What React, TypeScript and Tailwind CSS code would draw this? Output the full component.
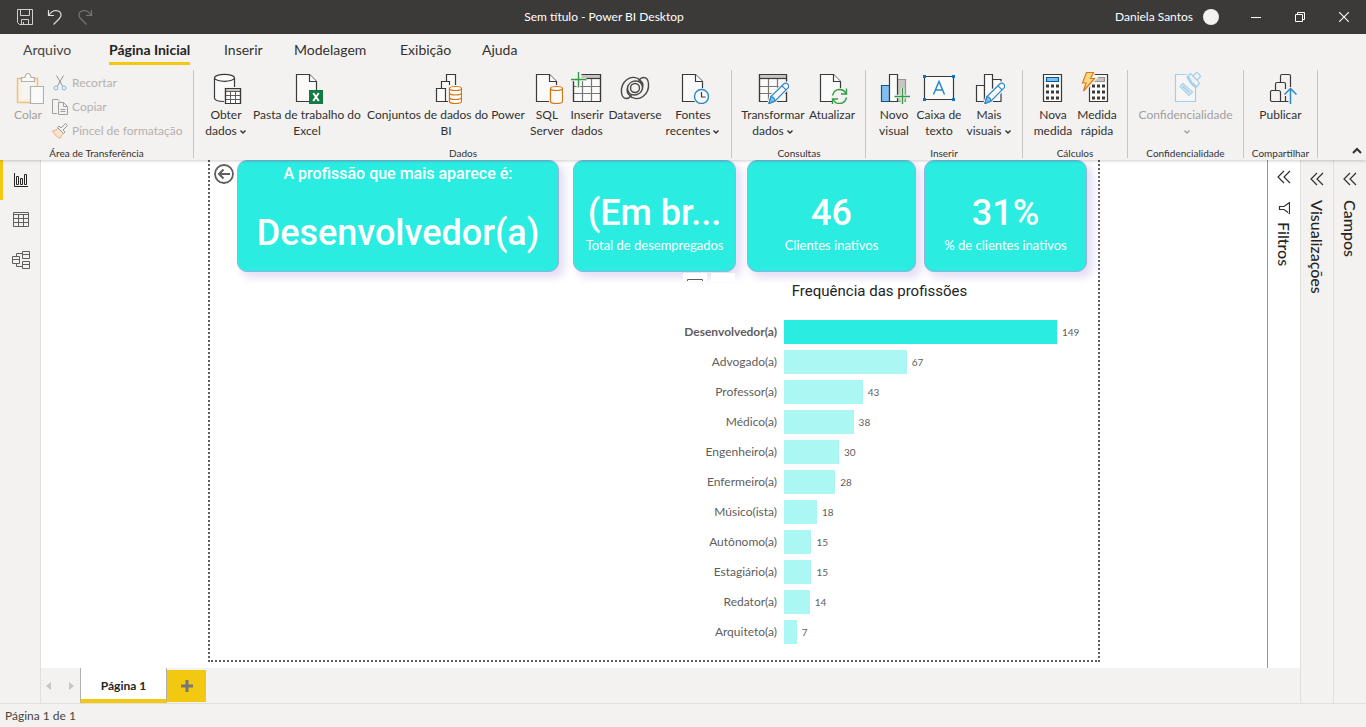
import type { ReactNode } from "react";
import { clsx } from "clsx";

const TABS = [
  { name: "Arquivo", box: "w-[86px]", tone: "text-[#484644]" },
  { name: "Página Inicial", box: "w-[115px]", tone: "text-[#252423] font-bold", active: true },
  { name: "Inserir", box: "w-[70px]", tone: "text-[#323130]" },
  { name: "Modelagem", box: "w-[106px]", tone: "text-[#323130]" },
  { name: "Exibição", box: "w-[82px]", tone: "text-[#323130]" },
  { name: "Ajuda", box: "w-[60px]", tone: "text-[#323130]" },
];

const JOBS = [
  { name: "Desenvolvedor(a)", count: 149 },
  { name: "Advogado(a)", count: 67 },
  { name: "Professor(a)", count: 43 },
  { name: "Médico(a)", count: 38 },
  { name: "Engenheiro(a)", count: 30 },
  { name: "Enfermeiro(a)", count: 28 },
  { name: "Músico(ista)", count: 18 },
  { name: "Autônomo(a)", count: 15 },
  { name: "Estagiário(a)", count: 15 },
  { name: "Redator(a)", count: 14 },
  { name: "Arquiteto(a)", count: 7 },
];

const MAX_COUNT = 149;

function Icon({ children, className = "size-8" }: { children: ReactNode; className?: string }) {
  return (
    <svg viewBox="0 0 32 32" fill="none" stroke="#3b3a39" strokeWidth="1.2" className={clsx("shrink-0", className)} aria-hidden="true">
      {children}
    </svg>
  );
}

function Chevron({ className = "" }: { className?: string }) {
  return (
    <svg viewBox="0 0 8 8" fill="none" stroke="currentColor" strokeWidth="1.4" className={clsx("inline-block size-2", className)} aria-hidden="true">
      <path d="M1.5 2.5 4 5l2.5-2.5" />
    </svg>
  );
}

/* shared icon parts */

function Doc({ x = 5 }: { x?: number }) {
  return (
    <g transform={`translate(${x} 2)`}>
      <path d="M.5.5h13l7 7v20H.5z" fill="#fafafa" />
      <path d="M13.5.5v7h7" fill="#fff" />
    </g>
  );
}

function Pencil() {
  return (
    <g>
      <path d="M12 31.5l2-7L27 11.8q1.8-1.5 3.7.3t.3 3.8L18 29z" fill="#fafafa" stroke="#f3f2f1" strokeWidth="3.5" />
      <path d="M12 31.5l2-7L27 11.8q1.8-1.5 3.7.3t.3 3.8L18 29z" fill="#fafafa" stroke="#2b88c8" />
      <path d="M12 31.5l2-7q3.5.5 4 4.5z" fill="#83beec" stroke="#2b88c8" />
      <path d="M25 13.8l4 4" stroke="#2b88c8" />
    </g>
  );
}

function Grid() {
  return (
    <g>
      <path d="M2.5 2.5h27v27h-27z" fill="#fafafa" />
      <path d="M3 3h26v3.5H3z" fill="#c8c6c4" stroke="none" />
      <path d="M2.5 6.5h27" />
      <path d="M3 14.5h26M3 21.5h26M11.5 7v22M20.5 7v22" stroke="#797775" />
      <path d="M2.5 2.5h27v27h-27z" />
    </g>
  );
}

function Keys({ x }: { x: number }) {
  return <path d={`M${x} 14h13M${x} 20h13M${x} 26h13`} strokeWidth="3" strokeDasharray="3 2" />;
}

const PasteIcon = (
  <Icon>
    <path d="M5.5 6.5h20v24h-20z" fill="#faf0dc" stroke="#e8c08c" strokeWidth="1.5" />
    <path d="M9.5 7h12v20h-12z" fill="#f6f5f4" stroke="none" />
    <path d="M9.5 9.5v-4H13q.5-4 3-4t3 4h3.500v4z" fill="#fafafa" stroke="#b3b0ad" />
    <path d="M18.5 14.5h13v17h-13z" fill="#fafafa" stroke="#b3b0ad" />
  </Icon>
);

const DatabaseIcon = (
  <Icon>
    <path d="M4.5 6v20q0 3.5 10 3.5t10-3.5V6" fill="#fafafa" />
    <ellipse cx="14.5" cy="5.8" rx="10" ry="3.5" fill="#fafafa" />
    <path d="M14 15h18v17H14z" fill="#f3f2f1" stroke="none" />
    <path d="M15.5 16.5h15v15h-15z" fill="#fff" />
    <path d="M16 17h14v2.5H16z" fill="#c8c6c4" stroke="none" />
    <path d="M15.5 19.5h15M15.5 23.5h15M15.5 27.5h15M20.5 19.5v12M25.5 19.5v12" stroke="#605e5c" strokeWidth="1" />
    <path d="M15.5 16.5h15v15h-15z" />
  </Icon>
);

const ExcelIcon = (
  <Icon>
    <Doc x={5} />
    <path d="M18 18h14v14H18z" fill="#107c41" stroke="none" />
    <path d="M22.2 21l5.6 8M27.8 21l-5.6 8" stroke="#fff" strokeWidth="2" />
  </Icon>
);

const DatasetIcon = (
  <Icon>
    <path d="M16.5 9V2.5h9v13h-9" fill="#fafafa" />
    <path d="M11.5 16V9.5h8v20h-8" fill="#fafafa" />
    <path d="M6.5 16.5h9v13h-9z" fill="#fafafa" />
    <path d="M18 13h14v19H18z" fill="#f3f2f1" stroke="none" />
    <path d="M19.5 16.5v13q0 2 6 2t6-2v-13" fill="#fff" stroke="#d9730d" />
    <ellipse cx="25.5" cy="16.5" rx="6" ry="2" fill="#fff" stroke="#d9730d" />
    <path d="M19.5 21q0 2 6 2t6-2M19.5 25.5q0 2 6 2t6-2" stroke="#d9730d" />
  </Icon>
);

const SqlIcon = (
  <Icon>
    <Doc x={5} />
    <path d="M18 13h14v19H18z" fill="#f3f2f1" stroke="none" />
    <path d="M19.5 16.5v13q0 2 6 2t6-2v-13" fill="#fafafa" stroke="#d9730d" />
    <ellipse cx="25.5" cy="16.5" rx="6" ry="2" fill="#fafafa" stroke="#d9730d" />
  </Icon>
);

const InsertDataIcon = (
  <Icon>
    <Grid />
    <path d="M0 0h10.5v7H0z" fill="#f3f2f1" stroke="none" />
    <path d="M7.5 0v15.5M0 7.5h15.5" stroke="#f3f2f1" strokeWidth="3.5" />
    <path d="M7.5 0v15.5M0 7.5h15.5" stroke="#2f9e44" strokeWidth="1.4" />
  </Icon>
);

const SWIRL = "M21.5 8.5C18 4.5 12 4.5 8 7.5 4 10.5 2 15 2.5 20.5c.3 4 2.5 6 5 6 2 0 3-.8 4.500-2.500C8.500 22.500 7.500 19 8.500 15.500 9.500 11.500 13 9 16.500 9c4 0 6.500 2 7 6.500";

const DataverseIcon = (
  <Icon>
    <g strokeWidth="1.4" stroke="#484644">
      <path d={SWIRL} />
      <path d={SWIRL} transform="rotate(180 16 16)" />
      <circle cx="16" cy="16" r="4.5" />
    </g>
  </Icon>
);

const RecentIcon = (
  <Icon>
    <Doc x={5} />
    <circle cx="24.5" cy="24.5" r="8.5" fill="#f3f2f1" stroke="none" />
    <circle cx="24.5" cy="24.5" r="7" fill="#fafafa" stroke="#2b88c8" strokeWidth="1.4" />
    <path d="M24.5 20v5h4" />
  </Icon>
);

const TransformIcon = (
  <Icon>
    <Grid />
    <Pencil />
  </Icon>
);

const RefreshIcon = (
  <Icon>
    <Doc x={4} />
    <circle cx="23.5" cy="24.5" r="8.5" fill="#f3f2f1" stroke="none" />
    <path d="M16.5 23.5q1.5-6 7-6 4.5 0 6.5 4M30.5 16.5V22H25M30.5 25.5q-1.5 6-7 6-4.5 0-6.5-4M16.5 32.5V27H22" stroke="#2f9e44" strokeWidth="1.4" />
  </Icon>
);

const NewVisualIcon = (
  <Icon>
    <path d="M3.5 13.5h8v16h-8z" fill="#83beec" stroke="#005a9e" />
    <path d="M19.5 7.5h8v22h-8z" fill="#c8c6c4" stroke="#979593" />
    <path d="M11.5 2.5h8v27h-8z" fill="#fafafa" />
    <path d="M24.5 16v16M16.5 24.5h16" stroke="#f3f2f1" strokeWidth="3.5" />
    <path d="M24.5 16v16M16.5 24.5H32" stroke="#2f9e44" strokeWidth="1.4" />
  </Icon>
);

const TextBoxIcon = (
  <Icon>
    <path d="M1.5 4.5h29v23h-29z" fill="#fafafa" />
    <path d="M10.5 22.5 16 9.500l5.5 13M12.500 18h7" stroke="#2b88c8" strokeWidth="1.5" />
    <path d="M0 3h3v3H0zM29 3h3v3h-3zM0 26h3v3H0zM29 26h3v3h-3z" fill="#0078d4" stroke="none" />
  </Icon>
);

const MoreVisualsIcon = (
  <Icon>
    <path d="M3.5 13.5h8v16h-8zM19.5 7.5H28v22h-8.500z" fill="#fafafa" />
    <path d="M11.5 2.5h8v27h-8z" fill="#fafafa" />
    <Pencil />
  </Icon>
);

const MeasureIcon = (
  <Icon>
    <path d="M6.5 2.5h18v27h-18z" fill="#fafafa" />
    <path d="M9.5 5.5h12v4h-12z" fill="#83beec" stroke="#005a9e" />
    <Keys x={9} />
  </Icon>
);

const QuickMeasureIcon = (
  <Icon>
    <path d="M8.5 2.5h18v27h-18z" fill="#fafafa" />
    <path d="M12 5.5h11.5v4H12z" fill="#c8c6c4" stroke="#979593" />
    <Keys x={11} />
    <path d="M5.5.5h7l-3 6h4L2.5 19 5 11H1.500z" fill="#fad98b" stroke="#f3f2f1" strokeWidth="4" />
    <path d="M5.5.5h7l-3 6h4L2.5 19 5 11H1.500z" fill="#fad98b" stroke="#e07b12" />
  </Icon>
);

const SensitivityIcon = (
  <Icon>
    <g stroke="#a3cfe8">
      <path d="M16.5 2.5h-11v27h20V16" fill="#f6f6f6" />
      <path d="M10 14.5l3-3 9.500 8.500-3.500 3.500z" />
      <path d="M12.5 14l7.500 7" strokeWidth="1.8" />
      <path d="M17.5 4.5l3-3L23 4l3.500-3.500q2.500.5 4 4L27 8l2.500 3.500-3.500 4q-6-3.500-8.500-11z" fill="#f3f2f1" />
      <path d="M17.5 4.5q3 6.500 8.500 10.500" strokeWidth="2.5" />
      <path d="M23 4l4 4" />
    </g>
  </Icon>
);

const PublishIcon = (
  <Icon>
    <path d="M15.5 10V4q0-1.500 1.500-1.500h7q1.500 0 1.500 1.500v11" />
    <path d="M10.5 18v-6q0-1.500 1.500-1.500h7q1.500 0 1.500 1.500v5" />
    <path d="M7 18.500h6.500q2 0 2 2v9H7q-1.500 0-1.500-1.500v-8q0-1.500 1.500-1.500zM15.500 29.500h8M20.500 24v5.500" />
    <path d="M25.500 32V16.500M19.500 22.500l6-6 6 6" stroke="#2b88c8" strokeWidth="1.5" />
  </Icon>
);

function Tool({ icon, lines, box, menu, disabled }: { icon: ReactNode; lines: string[]; box: string; menu?: boolean; disabled?: boolean }) {
  return (
    <button
      type="button"
      disabled={disabled}
      className={clsx(
        "flex flex-col items-center text-xs leading-4 whitespace-nowrap",
        disabled ? "text-[#a19f9d]" : "text-[#323130]",
        box,
      )}
    >
      {icon}
      <span className="mt-[3px]">{lines[0]}</span>
      {(lines[1] || menu) && (
        <span>
          {lines[1]}
          {menu && <Chevron className="ml-0.5" />}
        </span>
      )}
    </button>
  );
}

function Group({ label, box, children }: { label: string; box: string; children: ReactNode }) {
  return (
    <section className={clsx("flex h-[88px] shrink-0 flex-col border-r border-[#c8c6c4]", box)}>
      <div className="flex flex-1 justify-center pt-0.5">{children}</div>
      <h2 className="text-center text-[10px] leading-[10px] whitespace-nowrap text-[#323130]">{label}</h2>
    </section>
  );
}

function TitleBar() {
  return (
    <header className="flex h-[34px] items-center bg-[#3b3a39] text-xs text-white">
      <div className="flex items-center gap-[14px] pl-[17px]">
        <button type="button" aria-label="Salvar">
          <svg viewBox="0 0 16 16" fill="none" stroke="#d2d0ce" className="size-4">
            <path d="M.5.5h15v15h-13l-2-2zM3.500.5v6h9v-6M4.500 15.500v-5h7v5M6.500 15.500v-2.500" />
          </svg>
        </button>
        <button type="button" aria-label="Desfazer">
          <svg viewBox="0 0 16 16" fill="none" stroke="#e1dfdd" strokeWidth="1.2" className="size-4">
            <path d="M1.500 1v5.500H7M1.500 6.500Q5 1.500 9 1.500q5 .5 5 4.500 0 2-2 4L6.500 15.500" />
          </svg>
        </button>
        <button type="button" aria-label="Refazer" disabled>
          <svg viewBox="0 0 16 16" fill="none" stroke="#797775" strokeWidth="1.2" className="size-4">
            <path d="M14.500 1v5.500H9M14.500 6.500Q11 1.500 7 1.500 2 2 2 6q0 2 2 4l5.500 5.500" />
          </svg>
        </button>
      </div>
      <h1 className="flex-1 text-center">Sem título - Power BI Desktop</h1>
      <div className="flex items-center">
        <span className="w-[88px]">Daniela Santos</span>
        <span className="size-4 rounded-full bg-[#f3f2f1]" />
        <button type="button" aria-label="Minimizar" className="ml-[15px] flex w-11 justify-center">
          <svg viewBox="0 0 10 10" stroke="#fff" className="size-[10px]"><path d="M0 5.500h10" /></svg>
        </button>
        <button type="button" aria-label="Restaurar" className="flex w-11 justify-center">
          <svg viewBox="0 0 10 10" fill="none" stroke="#fff" className="size-[10px]"><path d="M.5 2.500h7v7h-7zM2.500 2.500v-2h7v7h-2" /></svg>
        </button>
        <button type="button" aria-label="Fechar" className="flex w-11 justify-center">
          <svg viewBox="0 0 10 10" stroke="#fff" strokeWidth="1.1" className="size-[10px]"><path d="M0 0l10 10M10 0 0 10" /></svg>
        </button>
      </div>
    </header>
  );
}

function Ribbon() {
  return (
    <div className="relative z-10 bg-[#f3f2f1] shadow-[0_1px_3px_rgba(0,0,0,0.2)]">
      <nav className="flex h-9 pl-[23px] text-sm">
        {TABS.map((tab) => (
          <div key={tab.name} className={clsx("shrink-0", tab.box)}>
            <button
              type="button"
              className={clsx(
                "h-[31px] border-b-[3px] pt-1 whitespace-nowrap",
                tab.active ? "border-[#f2c811]" : "border-transparent",
                tab.tone,
              )}
            >
              {tab.name}
            </button>
          </div>
        ))}
      </nav>
      <div className="flex h-[90px]">
        <Group label="Área de Transferência" box="w-[194px]">
          <Tool icon={PasteIcon} lines={["Colar"]} box="w-[52px] pl-1" disabled />
          <div className="flex flex-1 flex-col text-xs leading-4 text-[#b3b0ad]">
            <button type="button" disabled className="flex h-[22px] items-center gap-1">
              <svg viewBox="0 0 16 16" fill="none" stroke="#979593" className="size-4" aria-hidden="true">
                <path d="M4.500.5 10.500 11M11.500.5l-6 10.500" />
                <circle cx="4" cy="13" r="2" stroke="#83b5d6" />
                <circle cx="12" cy="13" r="2" stroke="#83b5d6" />
              </svg>
              Recortar
            </button>
            <button type="button" disabled className="flex h-[26px] items-center gap-1">
              <svg viewBox="0 0 16 16" fill="none" stroke="#a19f9d" className="size-4" aria-hidden="true">
                <path d="M5 14.500H.5v-14H6l2 2M6.500 3.500h5l4 4v8h-9zM11.500 3.500v4h4M8.500 10.500h5M8.500 12.500h5" />
              </svg>
              Copiar
            </button>
            <button type="button" disabled className="flex h-[22px] items-center gap-1 whitespace-nowrap">
              <svg viewBox="0 0 16 16" fill="none" stroke="#979593" className="size-4" aria-hidden="true">
                <path d="M.5 8q4-.5 6-3l5 5q-2.500 2.500-3.500 5.500Q3 13 .5 8z" fill="#fae3cc" stroke="#e8b08c" />
                <path d="M5.500 4.500 7 3l2 2 4.500-4.500 2 2L11 7l2 2-1.500 1.500z" fill="#f3f2f1" />
              </svg>
              Pincel de formatação
            </button>
          </div>
        </Group>
        <Group label="Dados" box="w-[538px] pl-px">
          <Tool icon={DatabaseIcon} lines={["Obter", "dados"]} box="w-[48px]" menu />
          <Tool icon={ExcelIcon} lines={["Pasta de trabalho do", "Excel"]} box="w-[114px]" />
          <Tool icon={DatasetIcon} lines={["Conjuntos de dados do Power", "BI"]} box="w-[164px]" />
          <Tool icon={SqlIcon} lines={["SQL", "Server"]} box="w-[38px]" />
          <Tool icon={InsertDataIcon} lines={["Inserir", "dados"]} box="w-[42px]" />
          <Tool icon={DataverseIcon} lines={["Dataverse"]} box="w-[54px]" />
          <Tool icon={RecentIcon} lines={["Fontes", "recentes"]} box="w-[62px]" menu />
        </Group>
        <Group label="Consultas" box="w-[134px] pl-px">
          <Tool icon={TransformIcon} lines={["Transformar", "dados"]} box="w-[66px]" menu />
          <Tool icon={RefreshIcon} lines={["Atualizar"]} box="w-[52px]" />
        </Group>
        <Group label="Inserir" box="w-[157px]">
          <Tool icon={NewVisualIcon} lines={["Novo", "visual"]} box="w-[40px]" />
          <Tool icon={TextBoxIcon} lines={["Caixa de", "texto"]} box="w-[50px]" />
          <Tool icon={MoreVisualsIcon} lines={["Mais", "visuais"]} box="w-[50px]" menu />
        </Group>
        <Group label="Cálculos" box="w-[105px]">
          <Tool icon={MeasureIcon} lines={["Nova", "medida"]} box="w-[44px]" />
          <Tool icon={QuickMeasureIcon} lines={["Medida", "rápida"]} box="w-[44px]" />
        </Group>
        <Group label="Confidencialidade" box="w-[116px]">
          <Tool icon={SensitivityIcon} lines={["Confidencialidade", ""]} box="w-[100px]" menu disabled />
        </Group>
        <Group label="Compartilhar" box="w-[74px]">
          <Tool icon={PublishIcon} lines={["Publicar"]} box="w-[60px]" />
        </Group>
        <div className="flex flex-1 items-end justify-end pr-1 pb-1">
          <button type="button" aria-label="Recolher faixa de opções">
            <svg viewBox="0 0 10 10" fill="none" stroke="#323130" strokeWidth="2" className="size-[10px]"><path d="M1 7l4-4 4 4" /></svg>
          </button>
        </div>
      </div>
    </div>
  );
}

function ViewRail() {
  return (
    <nav className="flex w-[41px] shrink-0 flex-col border-r border-[#e1dfdd]">
      <button type="button" aria-label="Relatório" className="flex h-10 items-center border-l-[3px] border-[#f2c811] pl-[11px]">
        <svg viewBox="0 0 14 14" fill="none" stroke="#252423" className="size-[14px]">
          <path d="M.5 0v13.500H14M2.500 3.500h2v8h-2zM6.500 5.500h2v6h-2zM10.500 1.500h2v10h-2z" />
        </svg>
      </button>
      <button type="button" aria-label="Dados" className="flex h-10 items-center pl-[13px]">
        <svg viewBox="0 0 16 16" fill="none" stroke="#605e5c" className="size-4">
          <path d="M.5.500h15v14H.5zM.5 2.500h15M.5 6.500h15M.5 10.500h15M5.500 2.500v12M10.500 2.500v12" />
        </svg>
      </button>
      <button type="button" aria-label="Modelo" className="flex h-10 items-center pl-3">
        <svg viewBox="0 0 18 18" fill="none" stroke="#605e5c" className="size-[18px]">
          <path d="M.5 5.500h7v7h-7zM.5 8.500h7M10.500.5h7v7h-7zM10.500 3.500h7M10.500 10.500h7v7h-7zM10.500 13.500h7M4.500 5.500v-3h6M4.500 12.500v3h6" />
        </svg>
      </button>
    </nav>
  );
}

const CARD = "relative flex h-28 min-w-0 flex-col items-center rounded-[10px] border border-[#8fb4e2] bg-[#2bece1] text-white shadow-[5px_5px_8px_1px_#e6dff5]";

function Card({ value, label, box, children }: { value: string; label: string; box: string; children?: ReactNode }) {
  return (
    <article className={clsx(CARD, box)}>
      <p className="mt-[29px] font-[Roboto] text-4xl leading-[46px] font-medium whitespace-nowrap">{value}</p>
      <p className="text-[13px] leading-[18px] whitespace-nowrap">{label}</p>
      {children}
    </article>
  );
}

function ReportPage() {
  return (
    <div className="flex-1 border-2 border-t-0 border-dotted border-[#605e5c]">
      <div className="flex items-start pr-[11px] pl-1">
        <button type="button" aria-label="Voltar" className="mt-1 mr-[3px] shrink-0">
          <svg viewBox="0 0 20 20" fill="none" stroke="#605e5c" strokeWidth="1.8" className="size-5">
            <circle cx="10" cy="10" r="9" />
            <path d="M16 10H5M9.500 5.500 5 10l4.500 4.500" strokeWidth="2" />
          </svg>
        </button>
        <article className={clsx(CARD, "mr-[14px] flex-[324]")}>
          <h2 className="mt-[3px] font-[Roboto] text-base leading-5 font-medium whitespace-nowrap">A profissão que mais aparece é:</h2>
          <p className="mt-[26px] font-[Roboto] text-4xl leading-[46px] font-medium">Desenvolvedor(a)</p>
        </article>
        <Card value="(Em br..." label="Total de desempregados" box="mr-[11px] flex-[163]">
          <div className="absolute right-0 -bottom-2.5 flex h-2 gap-1">
            <span className="flex w-6 items-end justify-center bg-white">
              <svg viewBox="0 0 16 2" fill="none" stroke="#605e5c" className="h-0.5 w-4"><path d="M.5 2V.5h15V2" /></svg>
            </span>
            <span className="w-6 bg-white" />
          </div>
        </Card>
        <Card value="46" label="Clientes inativos" box="mr-2 flex-[169]" />
        <Card value="31%" label="% de clientes inativos" box="flex-[163]" />
      </div>
      <figure className="mt-[9px] mr-[11px] ml-auto w-[415px]">
        <figcaption className="text-center font-[Roboto] text-[15px] leading-5 text-[#252423]">Frequência das profissões</figcaption>
        <ul className="mt-4 text-[#605e5c]">
          {JOBS.map((job, i) => (
            <li key={job.name} className="flex h-[30px] items-center">
              <span className={clsx("w-[112px] shrink-0 pr-[7px] text-right text-xs whitespace-nowrap", i === 0 && "font-bold")}>{job.name}</span>
              <div className="flex min-w-0 flex-1 items-center pr-[30px]">
                <div
                  className={clsx("h-6 shrink-0", i === 0 ? "bg-[#2bece1]" : "bg-[#aaf7f3]")}
                  style={{ width: `${(job.count / MAX_COUNT) * 100}%` }}
                />
                <span className="pl-[5px] text-[10px]">{job.count}</span>
              </div>
            </li>
          ))}
        </ul>
      </figure>
    </div>
  );
}

function Pane({ title, filter, box }: { title: string; filter?: boolean; box: string }) {
  return (
    <aside className={clsx("flex shrink-0 flex-col items-center", box)}>
      <button type="button" aria-label={`Expandir ${title}`}>
        <svg viewBox="0 0 14 14" fill="none" stroke="#323130" strokeWidth="1.2" className="size-[14px]">
          <path d="M7 1 1 7l6 6M13 1 7 7l6 6" />
        </svg>
      </button>
      {filter && (
        <svg viewBox="0 0 12 12" fill="none" stroke="#323130" strokeWidth="1.2" className="mt-[18px] mb-[-6px] size-3 shrink-0" aria-hidden="true">
          <path d="M11.500.5v11L6 7.500H1.500v-3H6z" />
        </svg>
      )}
      <h2 className="mt-[14px] text-base leading-5 font-medium text-[#252423] [writing-mode:vertical-rl]">{title}</h2>
    </aside>
  );
}

function PageTabs() {
  return (
    <div className="flex h-[35px] shrink-0 items-stretch bg-[#f3f2f1]">
      <div className="flex w-[39px] items-center justify-between pr-[6px] pl-[5px]">
        <button type="button" aria-label="Página anterior" disabled>
          <svg viewBox="0 0 5 8" fill="#c8c6c4" className="h-2 w-[5px]"><path d="M5 0v8L0 4z" /></svg>
        </button>
        <button type="button" aria-label="Próxima página" disabled>
          <svg viewBox="0 0 5 8" fill="#c8c6c4" className="h-2 w-[5px]"><path d="M0 0v8l5-4z" /></svg>
        </button>
      </div>
      <button type="button" className="w-[87px] border-x border-b-4 border-x-[#b3b0ad] border-b-[#f2c811] bg-white pt-1 text-xs font-bold text-[#252423]">
        Página 1
      </button>
      <button type="button" aria-label="Nova página" className="mt-0.5 mb-px flex w-[39px] items-center justify-center bg-[#f2c811]">
        <svg viewBox="0 0 12 12" stroke="#797775" strokeWidth="3" className="size-3"><path d="M6 0v12M0 6h12" /></svg>
      </button>
    </div>
  );
}

export default function App() {
  return (
    <div className="flex min-h-screen flex-col bg-[#f3f2f1] font-['Lato','Noto_Sans',sans-serif]">
      <TitleBar />
      <Ribbon />
      <div className="flex flex-1">
        <ViewRail />
        <main className="flex min-w-0 flex-1 flex-col">
          <div className="flex flex-1 bg-white">
            <div className="flex flex-1 px-[167px] pb-1.5">
              <ReportPage />
            </div>
            <Pane title="Filtros" filter box="w-[33px] border-l border-[#979593] pt-[10px]" />
          </div>
          <PageTabs />
        </main>
        <Pane title="Visualizações" box="w-[33px] border-l border-[#e1dfdd] pt-3" />
        <Pane title="Campos" box="w-[33px] border-l border-[#e1dfdd] pt-3" />
      </div>
      <footer className="h-6 border-t border-[#e1dfdd] pl-[5px] text-xs leading-6 text-[#484644]">Página 1 de 1</footer>
    </div>
  );
}
